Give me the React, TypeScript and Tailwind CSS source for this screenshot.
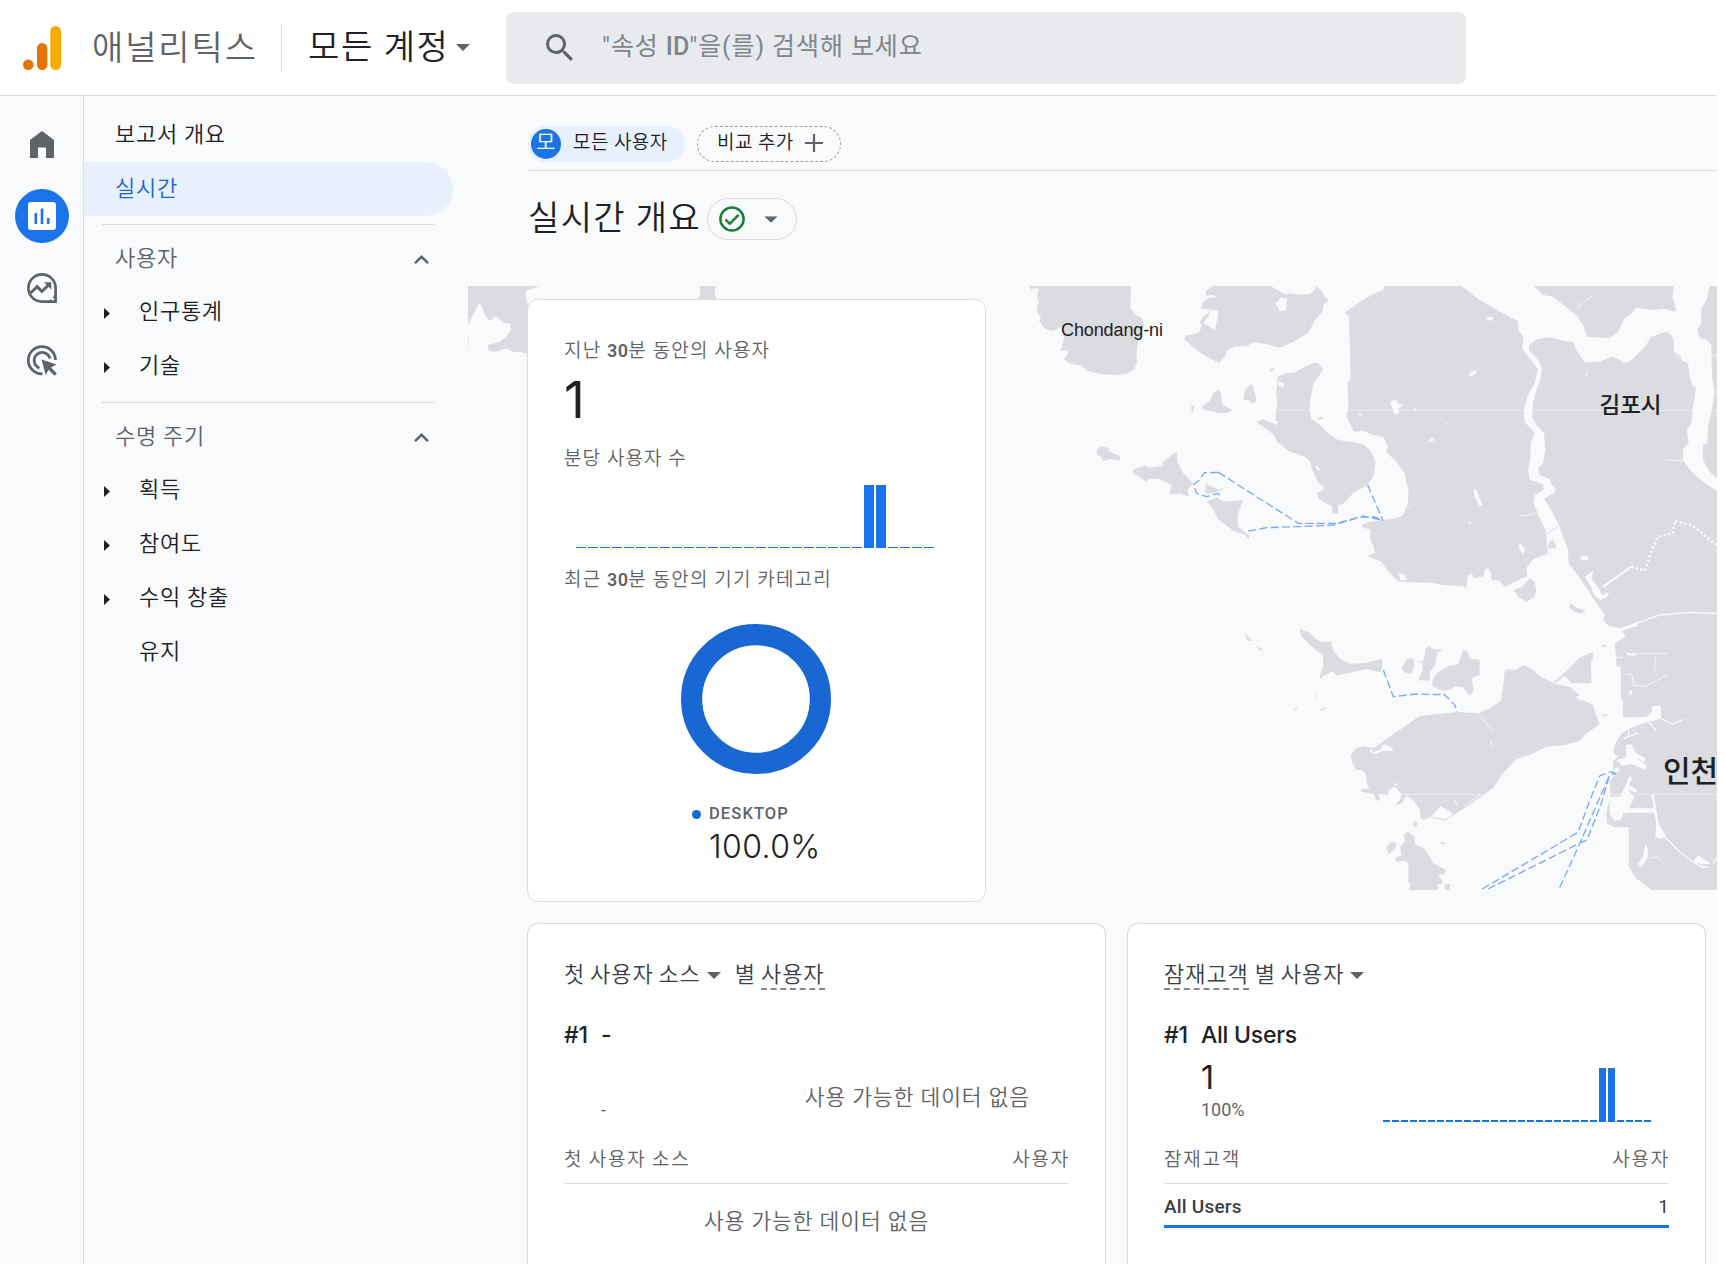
import type { ReactNode } from "react";

const KR = "font-['Roboto','Noto_Sans_CJK_KR',sans-serif]";
const GS = "font-['Inter','Noto_Sans_CJK_KR',sans-serif]";

function Caret({ className = "" }: { className?: string }) {
  return (
    <svg viewBox="0 0 14 7" className={`h-[7px] w-[14px] shrink-0 fill-[#5f6368] ${className}`}>
      <path d="M0 0h14L7 7z" />
    </svg>
  );
}

function Header() {
  return (
    <header className="flex h-24 shrink-0 items-start border-b border-[#dadce0] bg-white">
      <svg viewBox="0 0 38 44" className="ml-[23px] mt-[26px] h-11 w-[38px] shrink-0">
        <rect x="27.3" y="0" width="10.7" height="44" rx="5.3" fill="#f9ab00" />
        <rect x="14" y="17" width="10.4" height="27" rx="5.2" fill="#e37400" />
        <circle cx="5.3" cy="38.7" r="5.3" fill="#e37400" />
      </svg>
      <div className="ml-[31px] mt-6 h-12 w-[190px] border-r border-[#dadce0] text-[34px] leading-[48px] font-[350] tracking-[1.9px] whitespace-nowrap text-[#5f6368]">
        애널리틱스
      </div>
      <div className="ml-[26px] mt-[23px] flex w-[198px] items-center whitespace-nowrap">
        <span className="w-[148px] text-[34px] leading-[48px] font-[350] tracking-[1.6px] text-[#202124]">모든 계정</span>
        <Caret className="mt-[1px]" />
      </div>
      <div className="mt-3 flex h-[72px] w-[960px] items-center rounded-lg bg-[#e8eaed]">
        <svg viewBox="3 3 17.5 17.5" className="-mt-0.5 ml-10 h-[27px] w-[27px] fill-[#5f6368]">
          <path d="M15.5 14h-.79l-.28-.27A6.47 6.47 0 0 0 16 9.5 6.5 6.5 0 1 0 9.5 16c1.61 0 3.09-.59 4.23-1.57l.27.28v.79l5 4.99L20.49 19l-4.99-5zm-6 0C7.01 14 5 11.99 5 9.5S7.01 5 9.5 5 14 7.01 14 9.5 11.99 14 9.5 14z" />
        </svg>
        <span className="ml-[29px] -mt-[3px] text-[25px] tracking-[0.9px] whitespace-nowrap text-[#80868b]">
          "속성 <b className="font-medium tracking-normal">ID</b>"을(를) 검색해 보세요
        </span>
      </div>
    </header>
  );
}

function Rail() {
  return (
    <aside className="flex w-[84px] shrink-0 flex-col items-center border-r border-[#dadce0] pt-[35px]">
      <svg viewBox="0 0 24 27" className="h-[27px] w-6 fill-[#5f6368]">
        <path d="M12 0 24 9v18h-8V16.500H8V27H0V9z" />
      </svg>
      <div className="mt-[31px] flex h-[54px] w-[54px] items-center justify-center rounded-full bg-[#1a73e8]">
        <svg viewBox="0 0 28 28" className="h-7 w-7">
          <rect width="28" height="28" rx="3" fill="#fff" />
          <path d="M6.500 11h2.600v11H6.500zM12.700 6.500h2.600V22h-2.600zM18.900 16h2.600v6h-2.600z" fill="#1a73e8" />
        </svg>
      </div>
      <svg viewBox="0 0 30 30" className="mt-[30px] h-[30px] w-[30px]" fill="none" stroke="#5f6368" strokeWidth="2.700">
        <path d="M15 1.400C7.500 1.400 1.400 7.500 1.400 15S7.500 28.600 15 28.600h13.600V15C28.600 7.500 22.500 1.400 15 1.400z" />
        <path d="m3.500 20 6.700-6.300 4.600 4.800 8-7.700" strokeWidth="3" />
        <path d="M17 9.300h7.300v7.300z" fill="#5f6368" stroke="none" />
        <path d="M28.800 18v10.800H18.500c5.500-1.200 9-5 10.300-10.800z" fill="#5f6368" stroke="none" />
        <circle cx="25.800" cy="26" r="1.500" fill="#f8fafc" stroke="none" />
      </svg>
      <svg viewBox="0 0 30 31" className="mt-[42px] h-[31px] w-[30px]" fill="none" stroke="#5f6368" strokeWidth="2.800">
        <path d="M15.500 28.800A13.600 13.600 0 1 1 28.500 15" />
        <path d="M12.500 23A8 8 0 1 1 23 13.500" />
        <path d="m14.500 14.500 15 5-5.500 3 5.800 6-2.300 2.300-5.900-6-2.900 5.200z" fill="#5f6368" stroke="none" />
      </svg>
    </aside>
  );
}

function NavItem({ label, arrow = true }: { label: string; arrow?: boolean }) {
  return (
    <div className="flex h-[54px] items-center pl-5">
      <svg viewBox="0 0 6 11" className={arrow ? "mt-0.5 h-[11px] w-1.5 fill-[#202124]" : "invisible h-[11px] w-1.5"}>
        <path d="M0 0v11l6-5.500z" />
      </svg>
      <span className="-mt-px ml-[29px] text-[22px] font-[350] tracking-[0.7px] text-[#202124]">{label}</span>
    </div>
  );
}

function NavGroup({ label, children }: { label: string; children: ReactNode }) {
  return (
    <section className="pt-2 pb-px">
      <div className="ml-[18px] h-px w-[333px] bg-[#dadce0]" />
      <div className="mt-1.5 flex h-[54px] items-center justify-between pr-6 pl-[31px]">
        <span className="text-[22px] font-[350] tracking-[0.7px] text-[#5f6368]">{label}</span>
        <svg viewBox="0 0 15 9" className="mt-0.5 h-[9px] w-[15px]" fill="none" stroke="#5f6368" strokeWidth="2.400">
          <path d="m1 8.200 6.500-6.400L14 8.200" />
        </svg>
      </div>
      {children}
    </section>
  );
}

function Nav() {
  return (
    <nav className="w-[369px] shrink-0 pt-3">
      <div className="flex h-[54px] items-center pb-0.5 pl-[31px] text-[22px] font-[350] tracking-[0.7px] text-[#202124]">보고서 개요</div>
      <div className="flex h-[54px] items-center rounded-r-full bg-[#e8f0fe] pb-0.5 pl-[31px] text-[22px] font-[350] tracking-[0.7px] text-[#1967d2]">
        실시간
      </div>
      <NavGroup label="사용자">
        <NavItem label="인구통계" />
        <NavItem label="기술" />
      </NavGroup>
      <NavGroup label="수명 주기">
        <NavItem label="획득" />
        <NavItem label="참여도" />
        <NavItem label="수익 창출" />
        <NavItem label="유지" arrow={false} />
      </NavGroup>
    </nav>
  );
}

function RealtimeMap() {
  return (
    <svg viewBox="468 286 1249 604" className="absolute top-0 left-0 h-[604px] w-[1249px]">
      <g transform="translate(460 280) scale(.35714 .33333)" fill="#dadce0">
        <path d="M22 18H225L185 32L184 50L190 75V222L170 215L150 217L130 205L95 217L80 210L78 195L110 185L128 172L143 150L140 132L115 125L112 117L97 108L90 119L82 122L67 100L60 75L52 72L22 135z" />
        <path d="M22 170h2v40h-2zM672 18H717L712 40L720 60H665L672 45z" />
      </g>
      <g transform="translate(1000 280) scale(.33333)">
        <g fill="#dadce0">
          <path d="M87 18H393L391 85L405 103L424 113L433 135L425 160L415 180L410 205V250L403 268L380 281L345 285L300 281L262 272L240 255L212 252L190 237L200 228L204 211L181 213L193 175L188 140L170 148L152 153L132 143L117 122L123 115L111 95V80L118 67L110 48L117 27L108 24L92 28z" />
          <path fillRule="evenodd" d="M640 18H812L853 42L870 40L900 44L930 43L945 28L950 18L970 40L974 52L987 60L970 75L967 97L945 120L925 158L880 185L840 204L800 193L760 187L740 199L705 199L680 212L675 230L657 249L610 225L575 198L553 178L556 167L580 163L598 155L605 140L600 125L612 108L627 97L628 88L603 85L608 68L625 55L650 50L635 44L620 47L615 33zM632 88L656 93L645 150L610 130L627 105zM845 52L862 58L857 92L838 93L835 82L826 72z" />
          <path d="M604 380L630 362L640 340L655 328L663 340L668 375L698 390L680 398L655 400L635 394L610 388zM730 360L735 330L755 310L765 340L770 365L755 370L745 360zM574 375l8 4-1 16-7-2zM808 277l5-13 13 3-8 6zM950 417l14-8 8 6-16 4zM730 410l5 6z" />
          <path d="M290 508L302 499L325 503L326 512L345 522L358 527L362 543L330 537L310 543L303 530L292 525zM399 568L420 562L435 556L445 563L470 560L490 545L525 517L530 520L532 545L550 580L580 610L562 628L567 650L540 640L508 643L515 615L480 597L450 597L440 605L400 580zM617 612L655 628L680 624L640 640L617 640zM620 665L650 652L670 665L728 660L712 710L715 740L750 768L745 778L735 765L700 752L655 718L635 680zM594 762l5-4v5z" />
          <path d="M833 290L855 280L885 277L920 257L945 247L955 250L970 268L955 290L942 310L933 345L928 390L935 418L960 435L990 465L1015 480L1060 487L1089 492L1114 515L1127 545L1120 590L1100 617L1060 638L1030 672L1014 675V700H997V680L970 665L955 655L952 640L975 625L955 608L935 565L932 545L915 530L870 515L830 485L822 465L790 440L768 427L790 418L830 435L835 425L826 420L832 360L828 345z" />
          <path d="M1033 97L1055 83L1089 60L1119 43L1149 30L1154 18H1384L1439 60L1509 100L1554 123L1556 150L1571 175L1566 205L1589 235L1614 268L1604 310L1584 345L1571 390L1574 425L1604 460L1592 490L1591 540L1584 570L1589 600L1629 613L1631 630L1604 645L1601 670L1619 715L1637 750L1644 820L1599 838L1579 865L1582 888L1544 905L1514 920L1499 903L1474 900V880L1464 863L1454 870L1450 890L1421 895L1416 880L1404 885L1399 925L1389 918L1329 915L1294 908L1194 905L1164 873L1144 845L1101 828L1124 820L1121 800L1111 780L1111 750L1089 742L1085 735L1104 727L1149 720L1189 715L1209 705L1224 670L1226 630L1219 605L1214 580L1189 545L1159 515L1164 500L1149 470L1119 465L1089 452L1062 455L1038 405L1045 390L1043 305L1052 300L1047 110z" />
        </g>
        <g transform="translate(1089 0)" fill="#dadce0">
          <path d="M512 18L540 45L570 50L640 105L660 135L673 170L740 175L765 155L785 115L800 105L820 83L870 90L905 86L940 95L935 70L928 50L932 18zM1062 18H1040L1030 60L1015 85V130L1003 150L1012 175L1030 178L1045 195L1047 290L1055 340L1045 400L1035 440L1033 490L1020 495V540L1040 575L1062 595z" />
          <path d="M500 195L520 178L560 172L600 182L632 187L640 210L665 247L710 245L745 230L765 237L783 248L800 245L830 215L850 195L862 172L908 155L925 165L932 180V215L950 225L955 240L975 250L980 290L990 320L1000 320L990 380L985 430L972 450L977 490L962 505L960 540L985 575L1020 605L1062 633V930H675L640 880L617 850L615 810L590 740L570 700L543 655L575 640L578 628L565 612L560 597L530 585L525 565L540 550L547 510L543 460L520 435L507 410L510 370L520 330L532 300L537 265L525 240L497 210z" />
          <path d="M453 930L480 918L500 895L515 905L520 930L515 950L490 965L465 950zM555 806L560 783L570 780L581 804z" />
        </g>
        <g transform="translate(1389 930)" fill="#dadce0">
          <path d="M375 0L400 40L427 75L420 90L437 107L475 115L487 140L455 160L460 200V230H473V325L480 330V383L550 380L567 365V348H594V385L570 393L550 397L500 415L475 430L455 465L452 490L465 500L450 515L452 540L460 550L440 575L442 620L430 670L432 700L455 712H497V830L520 865L565 900H762V0z" />
          <path d="M320 40L345 55L368 60L355 72L335 65L320 54zM305 248L350 203L388 185L390 205L384 215L385 280H325L305 258L277 280L273 276zM415 165l8-2 6 10-12-4zM415 375l20-2-5 7z" />
        </g>
        <g transform="translate(600 930)" fill="#dadce0">
          <path d="M452 497L468 473L490 468L520 475L658 378L770 366L836 370L870 355L903 333L908 300L914 245L920 237L944 240L974 225L994 237L1024 262L1069 283L1109 290L1139 315L1143 327L1179 345L1188 375L1199 402L1154 435L1141 452L1094 465L1039 470L994 493L949 508L909 550L879 595L789 658L735 692L690 682L670 690L662 685L660 660L640 630L620 618L605 640L583 648L600 630L605 612L585 590L565 600V615L535 612L540 630L530 632L522 612L482 605L487 595L507 598L500 575L497 550L485 540H470L457 520z" />
          <path d="M298 117L325 125L345 145L365 157L392 153L402 185L425 210L450 222L500 218L520 212L547 207V235L542 247L500 237L440 250L408 257L400 243L375 255L358 267L360 255L370 230L368 195L340 175L305 140zM605 235L620 208L636 203L643 212L640 240L632 253L610 245zM645 215L670 213L678 175L686 167L700 178L732 180L712 187L705 225L690 245L688 273L655 270L668 240L667 218zM697 270L710 250L740 230L775 222L789 180L800 182L812 207L839 210V255L815 265L822 300L810 318L789 292L765 289L750 300L730 302L697 290z" />
          <path d="M610 735L625 725L643 740L645 762L670 775L690 800L700 820L737 840L735 853H715L730 880L712 885L715 900H625L632 885L625 875V820L610 812L590 815L585 805L605 795L600 770L615 755zM560 770L575 755L590 760L585 775L565 795zM738 882h12v18h-12l-6-8zM640 695h12v14h-14zM135 130L157 153H143zM165 162L192 182L178 180zM345 312l5 6-5 6zM280 359l14-8-6 9zM358 360l20-8-10 11zM715 757h20l-4 7z" />
        </g>
        <g fill="#f8fafc">
          <path d="M835 302L852 310L850 320L836 318zM950 556l10 14-6 4-7-14zM1078 398l8 8-8 2zM470 563l20-17v10z" />
          <g transform="translate(1089 0)">
            <path d="M82 365L97 357L108 372L122 374L106 385L107 404L93 400zM313 292L325 275L341 270L338 282zM367 115l15-5 11 5-10 8zM332 628L342 630L345 645L359 675L350 679L335 650zM465 795L475 792L487 810L480 822L470 810zM652 828h23v12h-20zM192 488l15-14 8 7zM665 286l8-8 3 4-8 6zM155 383h4v9h-4zM245 430h9l-4 5zM315 726h8v10zM108 880L125 883L132 902L112 900zM665 890L692 872L685 895L710 930H690L675 905zM8 493l10-2 8 10-6 8z" />
            <path d="m642 86 15-20m8-2 24-16M473 707h20l25-10M908 540l52 2M936 220l14 18M1046 228l16-4M130 690l18-15" fill="none" stroke="#f8fafc" strokeWidth="2.500" />
            <path d="m548 765 38-28" stroke="#dadce0" strokeWidth="3" />
            <path d="M720 920L770 885L805 860" fill="none" stroke="#f8fafc" strokeWidth="6" />
            <path d="M805 860L845 872L865 815L885 770L930 760L935 722L990 738L1062 797" fill="none" stroke="#f8fafc" strokeWidth="7" strokeDasharray="7 7" />
          </g>
          <g transform="translate(1389 930)">
            <path d="M488 465L505 462L518 488L548 505L545 515L520 505L552 527L548 540L505 522L478 528L460 510L490 500zM440 622L472 618L500 558L508 565L498 585L523 600L518 608L495 600L515 622L497 655H573L565 613H572L587 700L608 737L595 747L577 740L580 700L574 668H500L480 670L475 690L455 692L440 672zM547 762L555 780V800L535 830L525 822L540 800zM690 815L705 795L745 823L720 823zM488 185L500 190H525L515 197H495zM467 117L520 97L525 107L475 123zM385 0h25l8 15 20-10-5 15-20 10-15-10zM497 303l8-2 4 10-8 3zM340 318l18-3 4 18-18-6zM455 535l12-3 4 10-20 14z" />
            <path d="M520 100L590 75L680 67L762 71M594 385L630 403L662 388M497 420V440M482 445L528 428M556 395L580 423M600 735L650 785L685 812L720 833L735 830M750 822L762 802" fill="none" stroke="#f8fafc" strokeWidth="4" />
            <path d="M525 190H613M577 195L575 245M487 253H507L512 285L545 290L612 255M460 202H480M560 805L580 800L598 815M45 370L88 422M84 450V470M0 650L50 615" fill="none" stroke="#f8fafc" strokeWidth="2.500" />
          </g>
          <g transform="translate(600 930)">
            <path d="M508 483L515 477L520 487L540 480L553 462L578 475V483L550 482L525 493zM693 680L722 648L760 672L735 688zM580 577l15 8-10 2zM760 625l15 20-8-3z" />
          </g>
          <path d="M828 390H2151V393H828zM1200 1542H2151V1545H1200z" opacity=".45" />
        </g>
        <g fill="none" stroke="#7baaf7" strokeWidth="4" strokeDasharray="24 10">
          <path d="M745 753L800 743L895 740L1000 735L1080 712L1120 710L1149 720M655 577L895 730L1010 730L1089 708L1149 721M655 577L613 578L598 600L580 615L590 640L620 650L655 640L663 653M1103 615L1149 722" />
          <path d="M1150 1170L1180 1250L1250 1242L1315 1244L1328 1239L1365 1275L1370 1296" />
          <path d="M1447 1827L1734 1657L1774 1550L1799 1488L1834 1475L1849 1482M1464 1827L1744 1687L1761 1680L1804 1570L1829 1485L1849 1480M1679 1823L1744 1680L1774 1610L1814 1520L1829 1485" />
        </g>
      </g>
      <g fill="#202124">
        <text x="1061" y="336" fontSize="18" textLength="102" fontFamily="Liberation Sans, sans-serif">Chondang-ni</text>
        <text x="1599.500" y="413" fontSize="22.500" fontWeight="500" textLength="62" fontFamily="Noto Sans CJK KR, sans-serif">김포시</text>
        <text x="1663" y="782" fontSize="30" fontWeight="500" fontFamily="Noto Sans CJK KR, sans-serif">인천</text>
      </g>
    </svg>
  );
}

const MINUTES = Array.from({ length: 30 }, (_, i) => (i === 24 || i === 25 ? 1 : 0));

function OverviewCard() {
  return (
    <div className="relative h-[603px] w-[459px] rounded-[11px] border border-[#dadce0] bg-white px-9 text-[#5f6368]">
      <div className="mt-[37px] text-[19px] leading-7 font-[350] tracking-[1.15px] whitespace-nowrap">
        지난 <b className="text-[18px] font-semibold tracking-[0.3px]">30</b>분 동안의 사용자
      </div>
      <div className={`mt-2 h-[56px] text-[51px] leading-[54px] tracking-tight text-[#202124] ${GS}`}>1</div>
      <div className="mt-4 text-[19px] leading-7 font-[350] tracking-[1.1px]">분당 사용자 수</div>
      <div className="mt-3 ml-3 flex h-[63px] items-end gap-0.5">
        {MINUTES.map((v, i) => (
          <div key={i} className={v ? "h-full w-2.5 bg-[#1a73e8]" : "h-px w-2.5 bg-[#1a73e8]"} />
        ))}
      </div>
      <div className="mt-[18px] text-[19px] leading-7 font-[350] tracking-[1.15px] whitespace-nowrap">
        최근 <b className="text-[18px] font-semibold tracking-[0.3px]">30</b>분 동안의 기기 카테고리
      </div>
      <svg viewBox="0 0 150 150" className="mt-[30px] ml-[117px] h-[150px] w-[150px]">
        <circle cx="75" cy="75" r="64.400" fill="none" stroke="#1967d2" strokeWidth="21.200" />
      </svg>
      <div className="ml-32 mt-[30px] flex h-5 items-center">
        <span className="h-[9px] w-[9px] rounded-full bg-[#1967d2]" />
        <span className="mt-px ml-2 text-[16.500px] font-medium tracking-[1.1px]">DESKTOP</span>
      </div>
      <div className={`ml-[145px] mt-[3px] text-[32px] leading-10 font-[350] tracking-[0.4px] text-[#202124] ${GS}`}>100.0%</div>
    </div>
  );
}

function Dashed({ children }: { children: ReactNode }) {
  return <span className="h-[31px] border-b-2 border-dashed border-[#80868b]">{children}</span>;
}

function ListCard({ title, head, children, foot }: { title: ReactNode; head: string; children: ReactNode; foot: ReactNode }) {
  return (
    <div className="h-[360px] w-[579px] rounded-t-[11px] border border-b-0 border-[#dadce0] bg-white pr-9 pl-9">
      <div className="mt-[35px] flex h-[31px] items-start text-[22px] leading-[31px] font-[350] tracking-[0.95px] [word-spacing:-1.5px] whitespace-nowrap text-[#3c4043]">
        {title}
      </div>
      {children}
      <div className="flex h-12 items-start justify-between border-b border-[#dadce0] text-[19px] leading-[48px] font-[350] tracking-[1.8px] [word-spacing:-1px] text-[#5f6368]">
        <span>{head}</span>
        <span className="-mr-px">사용자</span>
      </div>
      {foot}
    </div>
  );
}

function SourceCard() {
  return (
    <ListCard
      head="첫 사용자 소스"
      title={
        <>
          <span>첫 사용자 소스</span>
          <Caret className="mt-[13px] ml-1.5" />
          <span className="mr-[5px] ml-3.5">별</span>
          <Dashed>사용자</Dashed>
        </>
      }
      foot={<div className="mt-[22px] text-center text-[21.500px] leading-8 font-[350] tracking-[0.9px] text-[#5f6368]">사용 가능한 데이터 없음</div>}
    >
      <div className={`mt-[29px] flex h-8 items-center text-[23px] font-medium text-[#202124] ${GS}`}>
        <span className="w-[37px] tracking-[-0.2px]">#1</span>-
      </div>
      <div className="flex h-[85px] justify-between">
        <span className="mt-[45px] ml-[37px] text-[18px] text-[#5f6368]">-</span>
        <span className="mt-[31px] mr-[39px] text-[21.500px] leading-8 font-[350] tracking-[0.9px] text-[#5f6368]">사용 가능한 데이터 없음</span>
      </div>
    </ListCard>
  );
}

function AudienceCard() {
  return (
    <ListCard
      head="잠재고객"
      title={
        <>
          <Dashed>잠재고객</Dashed>
          <span className="ml-1.5">별 사용자</span>
          <Caret className="mt-[13px] ml-1.5" />
        </>
      }
      foot={
        <div className={`flex h-[44px] justify-between border-b-[3px] border-[#1a73e8] text-[19px] leading-[45px] text-[#3c4043] ${KR}`}>
          <span className="font-medium tracking-[0.2px]">All Users</span>
          <span>1</span>
        </div>
      }
    >
      <div className={`mt-[29px] flex h-8 items-center text-[23px] font-medium tracking-[-0.25px] text-[#202124] ${GS}`}>
        <span className="w-[37px]">#1</span>All Users
      </div>
      <div className="flex h-[85px] justify-between">
        <div className="ml-[37px]">
          <div className={`mt-[7px] text-[32px] leading-10 text-[#202124] ${GS}`}>1</div>
          <div className="text-[18px] leading-6 text-[#5f6368]">100%</div>
        </div>
        <div className="mt-[17px] mr-[18px] flex h-[54px] items-end gap-0.5">
          {MINUTES.map((v, i) => (
            <div key={i} className={v ? "h-full w-[7px] bg-[#1a73e8]" : "h-0.5 w-[7px] bg-[#1a73e8]"} />
          ))}
        </div>
      </div>
    </ListCard>
  );
}

function Main() {
  return (
    <main className="flex min-w-0 flex-1 flex-col pl-[15px]">
      <div className="ml-[60px] flex h-[75px] shrink-0 items-start border-b border-[#dadce0] pt-[30px] text-[19px] font-[350] tracking-[0.45px] text-[#202124]">
        <div className="flex h-9 w-[157px] items-center rounded-full bg-[#e8f0fe] pl-[3px]">
          <span className="flex h-[30px] w-[30px] items-center justify-center rounded-full bg-[#1a73e8] pb-1 text-[21px] leading-none text-white">모</span>
          <span className="ml-3 -mt-px whitespace-nowrap">모든 사용자</span>
        </div>
        <div className="ml-3 flex h-9 w-36 items-center rounded-full border border-dashed border-[#9aa0a6] pl-[19px]">
          <span className="-mt-px whitespace-nowrap">비교 추가</span>
          <svg viewBox="0 0 18 18" className="-mt-0.5 ml-auto mr-[17px] h-[18px] w-[18px]" stroke="#5f6368" strokeWidth="2.200">
            <path d="M9 0v18M0 9h18" />
          </svg>
        </div>
      </div>
      <div className="ml-[60px] flex h-[115px] shrink-0 items-start pt-[27px]">
        <h1 className="w-[179px] text-[34px] leading-10 font-[350] tracking-[1.4px] whitespace-nowrap text-[#202124]">실시간 개요</h1>
        <div className="flex h-[42px] w-[90px] items-center rounded-full border border-[#dadce0] pl-[11px]">
          <svg viewBox="0 0 26 26" className="h-[26px] w-[26px]" fill="none" stroke="#188038" strokeWidth="2.500">
            <circle cx="13" cy="13" r="11.600" />
            <path d="m6.500 13.500 4.300 4.300 8.800-9" />
          </svg>
          <Caret className="ml-[19px] scale-95" />
        </div>
      </div>
      <div className="relative h-[637px] shrink-0 pt-[13px] pl-[59px]">
        <RealtimeMap />
        <OverviewCard />
      </div>
      <div className="flex gap-[21px] pl-[59px]">
        <SourceCard />
        <AudienceCard />
      </div>
    </main>
  );
}

export default function App() {
  return (
    <div className="h-[1276px] w-[1726px] overflow-hidden bg-white">
      <div className={`flex h-[1264px] w-[1717px] flex-col overflow-hidden bg-[#f8fafc] ${KR}`}>
        <Header />
        <div className="flex min-h-0 flex-1">
          <Rail />
          <Nav />
          <Main />
        </div>
      </div>
    </div>
  );
}
